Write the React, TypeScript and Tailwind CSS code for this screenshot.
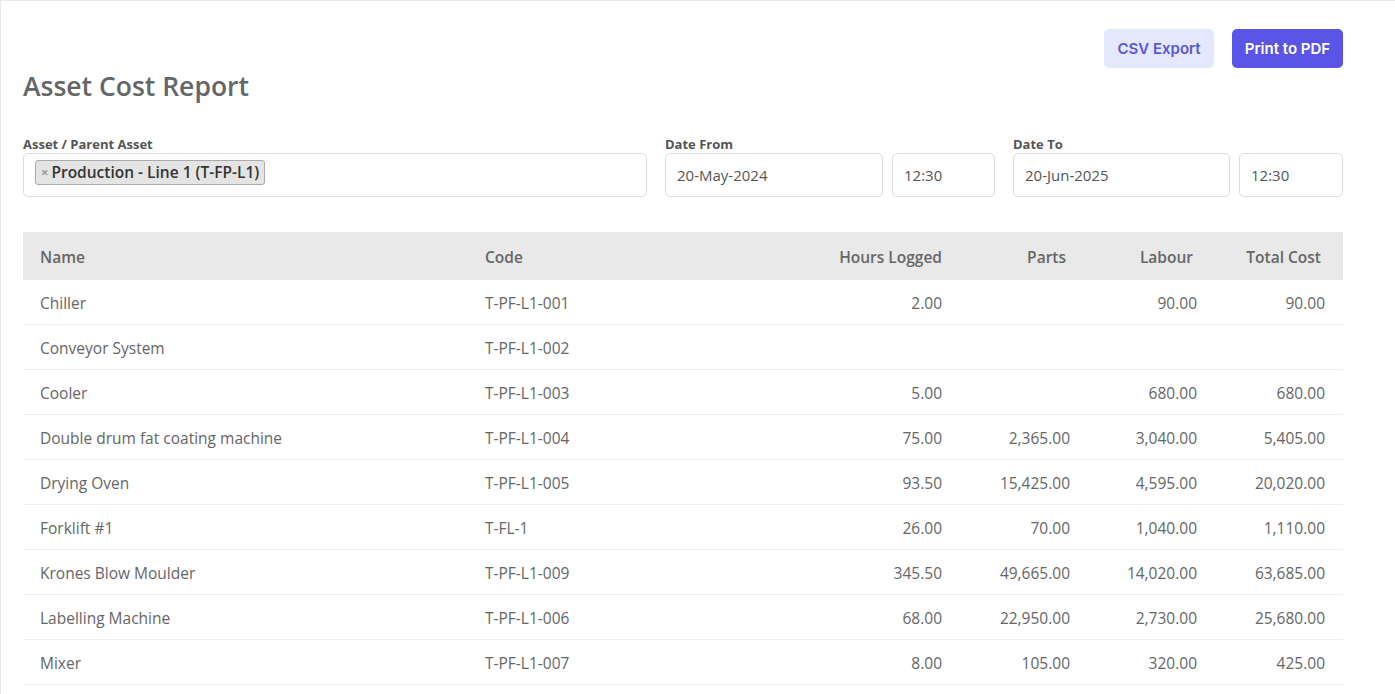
import React from "react";

interface Row {
  name: string;
  code: string;
  hours: string;
  parts: string;
  labour: string;
  total: string;
}

const rows: Row[] = [
  { name: "Chiller", code: "T-PF-L1-001", hours: "2.00", parts: "", labour: "90.00", total: "90.00" },
  { name: "Conveyor System", code: "T-PF-L1-002", hours: "", parts: "", labour: "", total: "" },
  { name: "Cooler", code: "T-PF-L1-003", hours: "5.00", parts: "", labour: "680.00", total: "680.00" },
  { name: "Double drum fat coating machine", code: "T-PF-L1-004", hours: "75.00", parts: "2,365.00", labour: "3,040.00", total: "5,405.00" },
  { name: "Drying Oven", code: "T-PF-L1-005", hours: "93.50", parts: "15,425.00", labour: "4,595.00", total: "20,020.00" },
  { name: "Forklift #1", code: "T-FL-1", hours: "26.00", parts: "70.00", labour: "1,040.00", total: "1,110.00" },
  { name: "Krones Blow Moulder", code: "T-PF-L1-009", hours: "345.50", parts: "49,665.00", labour: "14,020.00", total: "63,685.00" },
  { name: "Labelling Machine", code: "T-PF-L1-006", hours: "68.00", parts: "22,950.00", labour: "2,730.00", total: "25,680.00" },
  { name: "Mixer", code: "T-PF-L1-007", hours: "8.00", parts: "105.00", labour: "320.00", total: "425.00" },
];

const cols = "grid grid-cols-[445px_292px_199px_128px_127px_129px]";

const Field = ({ value, width }: { value: string; width: string }) => (
  <div className={`${width} h-[44px] border border-[#dcdcdc] rounded-[5px] flex items-center px-[11px] text-[15px] text-[#555]`}>
    {value}
  </div>
);

const App = () => {
  return (
    <div
      className="min-h-[694px] bg-white border-l border-t border-[#e8e8e8] pl-[22px] pr-[52px] pt-[28px]"
      style={{ fontFamily: "'Open Sans', 'Liberation Sans', sans-serif" }}
    >
      {/* actions */}
      <div className="flex justify-end gap-[18px]" style={{ fontFamily: "Inter, 'Open Sans', sans-serif" }}>
        <button className="h-[39px] w-[110px] pt-[2px] rounded-[5px] bg-[#e3e8fd] text-[#5b55d6] text-[15px] font-semibold">
          CSV Export
        </button>
        <button className="h-[39px] w-[111px] pt-[2px] rounded-[5px] bg-[#5a55e6] text-white text-[15px] font-semibold">
          Print to PDF
        </button>
      </div>

      <h1 className="mt-[2px] text-[26.5px] leading-[32px] font-semibold text-[#666]">Asset Cost Report</h1>

      {/* filters */}
      <div className="mt-[33px] flex">
        <div className="flex flex-col">
          <label className="text-[13px] leading-[18px] font-bold text-[#555]">Asset / Parent Asset</label>
          <div className="w-[624px] h-[44px] border border-[#dcdcdc] rounded-[5px] flex items-start pt-[6px] pl-[11px]">
            <span className="h-[25px] flex items-center gap-[3px] px-[5px] bg-[#e4e4e4] border border-[#aaa] rounded-[3px] text-[15.5px] font-semibold text-[#333]">
              <span className="text-[13px] text-[#999] font-bold">×</span>
              Production - Line 1 (T-FP-L1)
            </span>
          </div>
        </div>
        <div className="flex flex-col ml-[18px]">
          <label className="text-[13px] leading-[18px] font-bold text-[#555]">Date From</label>
          <div className="flex gap-[9px]">
            <Field value="20-May-2024" width="w-[218px]" />
            <Field value="12:30" width="w-[103px]" />
          </div>
        </div>
        <div className="flex flex-col ml-[18px]">
          <label className="text-[13px] leading-[18px] font-bold text-[#555]">Date To</label>
          <div className="flex gap-[9px]">
            <Field value="20-Jun-2025" width="w-[217px]" />
            <Field value="12:30" width="w-[104px]" />
          </div>
        </div>
      </div>

      {/* table */}
      <div className="mt-[35px] w-[1320px] text-[15.5px] leading-[22px] text-[#666]">
        <div className={`${cols} h-[48px] pt-[2px] items-center bg-[#e9e9e9] font-semibold`}>
          <div className="pl-[17px]">Name</div>
          <div className="pl-[17px]">Code</div>
          <div className="text-right pr-[17px]">Hours Logged</div>
          <div className="text-right pr-[21px]">Parts</div>
          <div className="text-right pr-[21px]">Labour</div>
          <div className="text-right pr-[22px]">Total Cost</div>
        </div>
        {rows.map((r) => (
          <div key={r.code} className={`${cols} h-[45px] pt-[2px] items-center border-b border-[#efefef]`}>
            <div className="pl-[17px]">{r.name}</div>
            <div className="pl-[17px]">{r.code}</div>
            <div className="text-right pr-[17px]">{r.hours}</div>
            <div className="text-right pr-[17px]">{r.parts}</div>
            <div className="text-right pr-[17px]">{r.labour}</div>
            <div className="text-right pr-[18px]">{r.total}</div>
          </div>
        ))}
      </div>
    </div>
  );
};

export default App;
